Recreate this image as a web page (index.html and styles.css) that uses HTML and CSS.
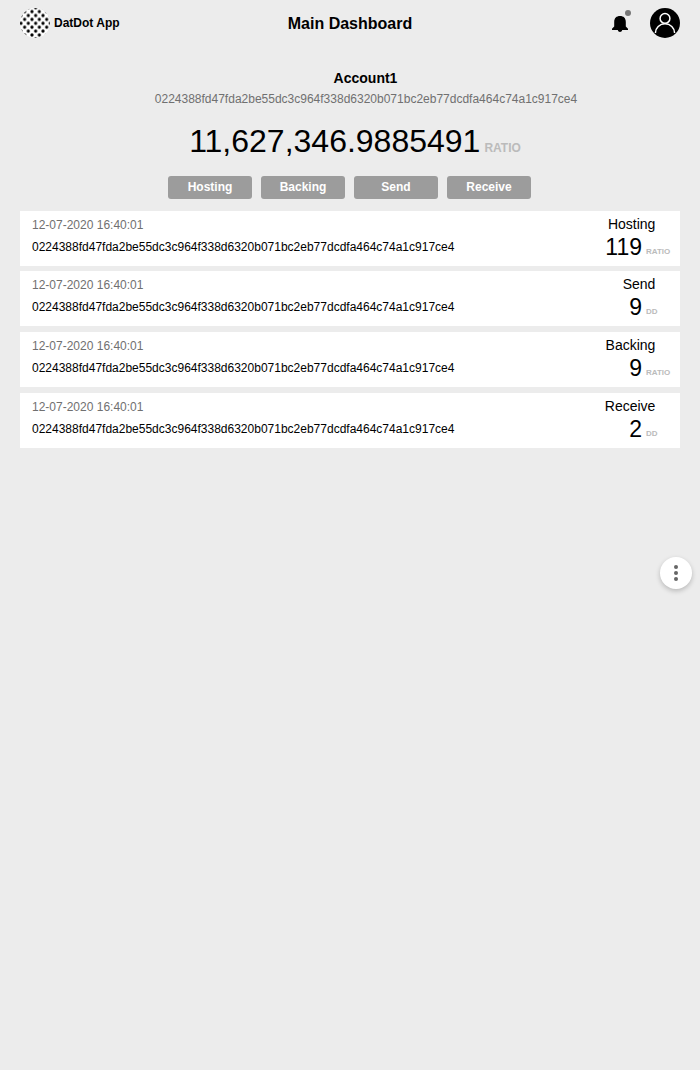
FILE: index.html
```html
<!DOCTYPE html>
<html lang="en">
<head>
<meta charset="utf-8">
<title>DatDot App</title>
<link rel="stylesheet" href="styles.css">
</head>
<body>
<header class="topbar">
  <div class="brand">
    <svg class="logo" viewBox="0 0 30 30">
      <defs>
        <pattern id="dots" x="0.95" y="7.5" width="7.35" height="7.8" patternUnits="userSpaceOnUse">
          <circle cx="3.675" cy="3.9" r="1.6"/>
          <circle cx="0" cy="0" r="1.6"/><circle cx="7.35" cy="0" r="1.6"/>
          <circle cx="0" cy="7.8" r="1.6"/><circle cx="7.35" cy="7.8" r="1.6"/>
        </pattern>
      </defs>
      <circle cx="15" cy="15" r="15" fill="#fff"/>
      <circle cx="15" cy="15" r="15" fill="url(#dots)"/>
    </svg>
    <span class="brand-name">DatDot App</span>
  </div>
  <h1 class="title">Main Dashboard</h1>
  <div class="actions">
    <svg class="bell" viewBox="0 0 24 26">
      <path d="M4 20V18.800L6.200 16.500V12C6.200 8 8.500 6 12 6S17.800 8 17.800 12V16.500L20 18.800V20H14.200C13.900 22.600 10.100 22.600 9.800 20Z"/>
      <circle cx="20" cy="3" r="3" fill="#777"/>
    </svg>
    <svg class="avatar" viewBox="0 0 30 30">
      <circle cx="15" cy="15" r="15"/>
      <g fill="none" stroke="#fff" stroke-width="1.5"><circle cx="15" cy="10.400" r="4.900"/><path d="M5.400 25A9.600 9.200 0 0 1 24.600 25"/></g>
    </svg>
  </div>
</header>
<main>
  <section class="account">
    <h2 class="account-name">Account1</h2>
    <p class="address">0224388fd47fda2be55dc3c964f338d6320b071bc2eb77dcdfa464c74a1c917ce4</p>
    <div class="balance"><span class="sum">11,627,346.9885491</span><span class="unit">RATIO</span></div>
    <nav class="buttons">
      <button class="button">Hosting</button><button class="button">Backing</button><button class="button">Send</button><button class="button">Receive</button>
    </nav>
  </section>
  <section class="list">
    <article class="card">
      <div class="info"><time class="date">12-07-2020 16:40:01</time><p class="hash">0224388fd47fda2be55dc3c964f338d6320b071bc2eb77dcdfa464c74a1c917ce4</p></div>
      <div class="result"><span class="kind">Hosting</span><span class="amount">119</span><span class="currency">RATIO</span></div>
    </article>
    <article class="card">
      <div class="info"><time class="date">12-07-2020 16:40:01</time><p class="hash">0224388fd47fda2be55dc3c964f338d6320b071bc2eb77dcdfa464c74a1c917ce4</p></div>
      <div class="result"><span class="kind">Send</span><span class="amount">9</span><span class="currency">DD</span></div>
    </article>
    <article class="card">
      <div class="info"><time class="date">12-07-2020 16:40:01</time><p class="hash">0224388fd47fda2be55dc3c964f338d6320b071bc2eb77dcdfa464c74a1c917ce4</p></div>
      <div class="result"><span class="kind">Backing</span><span class="amount">9</span><span class="currency">RATIO</span></div>
    </article>
    <article class="card">
      <div class="info"><time class="date">12-07-2020 16:40:01</time><p class="hash">0224388fd47fda2be55dc3c964f338d6320b071bc2eb77dcdfa464c74a1c917ce4</p></div>
      <div class="result"><span class="kind">Receive</span><span class="amount">2</span><span class="currency">DD</span></div>
    </article>
  </section>
</main>
<button class="more" aria-label="More">
  <svg class="more-icon" viewBox="0 0 32 32" fill="#666"><circle cx="16" cy="10" r="2"/><circle cx="16" cy="16" r="2"/><circle cx="16" cy="22" r="2"/></svg>
</button>
</body>
</html>
```
FILE: styles.css
```css
* { box-sizing: border-box; }
body {
  margin: 0;
  min-height: 1070px;
  background: #ececec;
  color: #000;
  font-family: "Liberation Sans", Arial, sans-serif;
}
h1, h2, p { margin: 0; }
svg { display: block; }
.topbar {
  display: grid;
  grid-template-columns: 1fr auto 1fr;
  align-items: center;
  height: 46px;
  padding: 0 20px;
}
.brand { display: flex; align-items: center; gap: 4px; }
.logo, .avatar { width: 30px; height: 30px; }
.brand-name { font-size: 12px; font-weight: bold; }
.title { padding-top: 1px; font-size: 16px; line-height: 20px; }
.actions { display: flex; justify-content: flex-end; align-items: center; gap: 18px; }
.bell { width: 24px; height: 26px; }
.account { padding-top: 23px; height: 164.6px; }
.account-name { padding-left: 31px; font-size: 14px; line-height: 18px; text-align: center; }
.address { padding-left: 32px; margin-top: 4px; font-size: 12px; line-height: 16px; text-align: center; color: #707070; }
.balance { display: flex; justify-content: center; align-items: baseline; gap: 4px; height: 40px; margin-top: 14px; padding-left: 10px; line-height: 40px; }
.sum { font-size: 32px; }
.unit { font-size: 12px; font-weight: bold; color: #bbb; }
.buttons { display: flex; justify-content: center; gap: 9px; margin-top: 15px; padding-right: 1px; }
.button {
  width: 84px;
  height: 23px;
  padding: 0 0 1px;
  border: 0;
  border-radius: 3px;
  background: #9c9c9c;
  color: #fff;
  font: bold 12px "Liberation Sans", Arial, sans-serif;
}
.list { display: grid; gap: 5.7px; padding: 0 20px; }
.card { display: flex; justify-content: space-between; height: 55px; padding: 5px 0 0 12px; background: #fff; }
.date { display: block; font-size: 12px; line-height: 18px; color: #707070; }
.hash { margin-top: 4px; font-size: 12px; line-height: 18px; }
.result { display: grid; grid-template-columns: 1fr 34px; column-gap: 4px; align-items: baseline; align-content: start; width: 100px; }
.kind { grid-column: 1 / 3; padding-right: 24.6px; font-size: 14px; line-height: 17px; text-align: right; }
.amount { font-size: 23px; line-height: 28px; text-align: right; }
.currency { padding-bottom: 1px; font-size: 8px; font-weight: bold; color: #bbb; transform: translateY(-1px); }
.more {
  position: fixed;
  top: 557px;
  right: 8px;
  width: 32px;
  height: 32px;
  padding: 0;
  border: 0;
  border-radius: 50%;
  background: #fff;
  box-shadow: 0 2px 5px rgba(0, 0, 0, 0.22);
}
.more-icon { width: 32px; height: 32px; }
```
